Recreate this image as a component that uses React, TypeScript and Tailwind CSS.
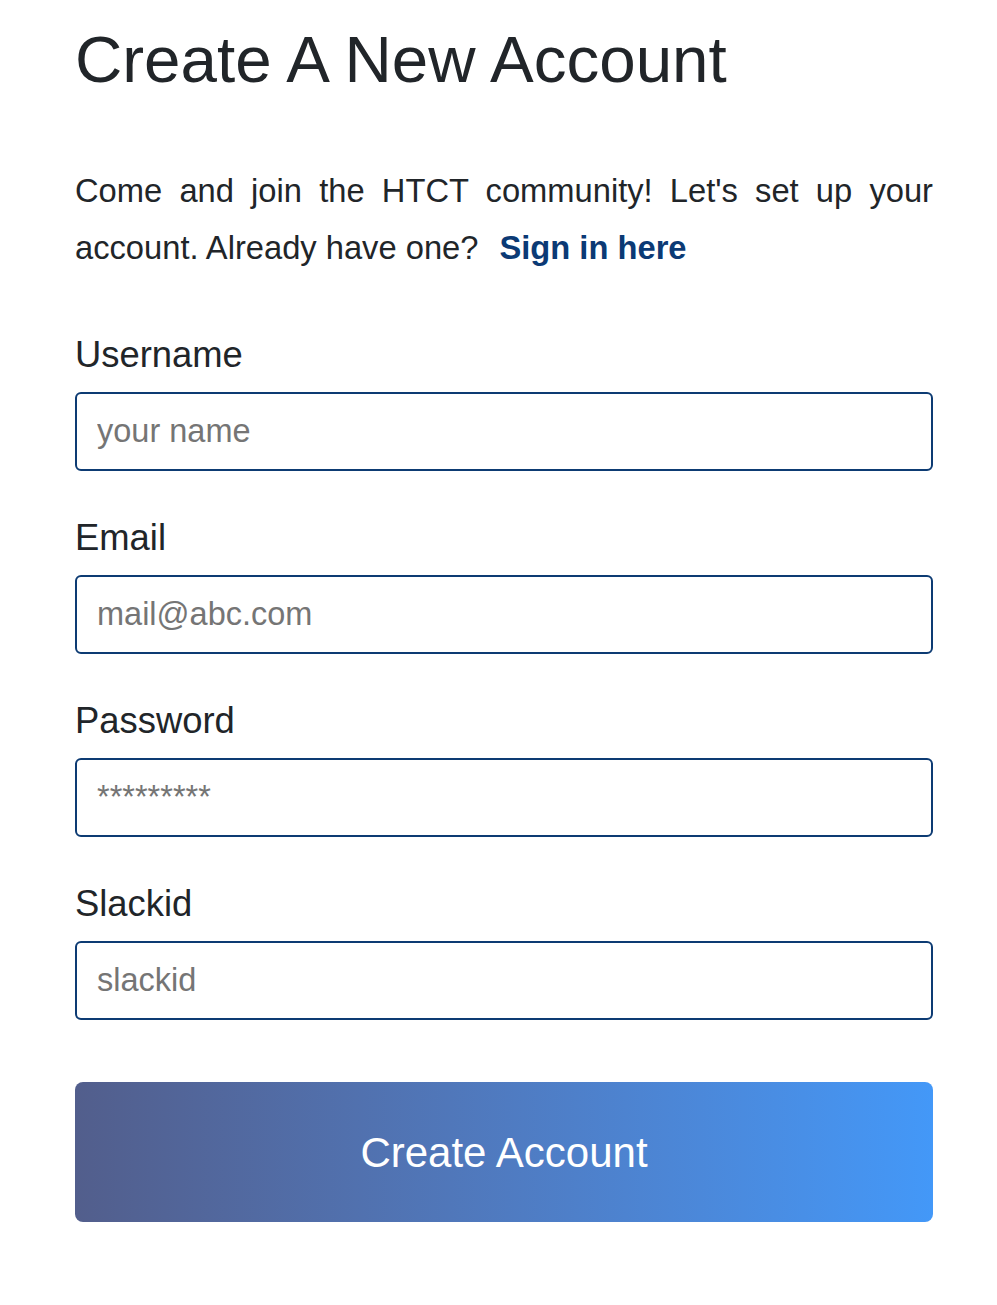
import { useState } from "react";

const fields = [
  { id: "username", label: "Username", type: "text", placeholder: "your name" },
  { id: "email", label: "Email", type: "email", placeholder: "mail@abc.com" },
  { id: "password", label: "Password", type: "password", placeholder: "*********" },
  { id: "slackid", label: "Slackid", type: "text", placeholder: "slackid" },
];

export default function App() {
  const [values, setValues] = useState<Record<string, string>>({});

  return (
    <div className="min-h-screen bg-white font-['Liberation_Sans',Arial,sans-serif] text-[#212529]">
      <div className="ml-[75px] w-[858px] pt-[20px]">
        <h1 className="text-[65.5px] leading-[80px] font-normal">Create A New Account</h1>

        <p className="mt-[62px] text-[32.7px] leading-[57px] text-justify">
          Come and join the HTCT community! Let's set up your account. Already have one?
          <a href="#" className="ml-[21px] inline-block font-bold text-[#0b3a75] no-underline">Sign in here</a>
        </p>

        <form className="mt-[58px] flex flex-col gap-[46px]" onSubmit={(e) => e.preventDefault()}>
          {fields.map((f) => (
            <div key={f.id} className="flex flex-col gap-[16px]">
              <label htmlFor={f.id} className="text-[36.4px] leading-[42px]">{f.label}</label>
              <input
                id={f.id}
                type={f.type === "password" ? "text" : f.type}
                placeholder={f.placeholder}
                value={values[f.id] ?? ""}
                onChange={(e) => setValues({ ...values, [f.id]: e.target.value })}
                className="h-[79px] w-full rounded-[6px] border-2 border-[#0d3b73] px-[20px] text-[32.5px] text-[#212529] outline-none placeholder:text-[#757575]"
              />
            </div>
          ))}

          <button
            type="submit"
            className="mt-[16px] h-[140px] w-full rounded-[8px] bg-gradient-to-r from-[#525e8c] to-[#4398f8] text-[42px] text-white"
          >
            Create Account
          </button>
        </form>
      </div>
    </div>
  );
}
